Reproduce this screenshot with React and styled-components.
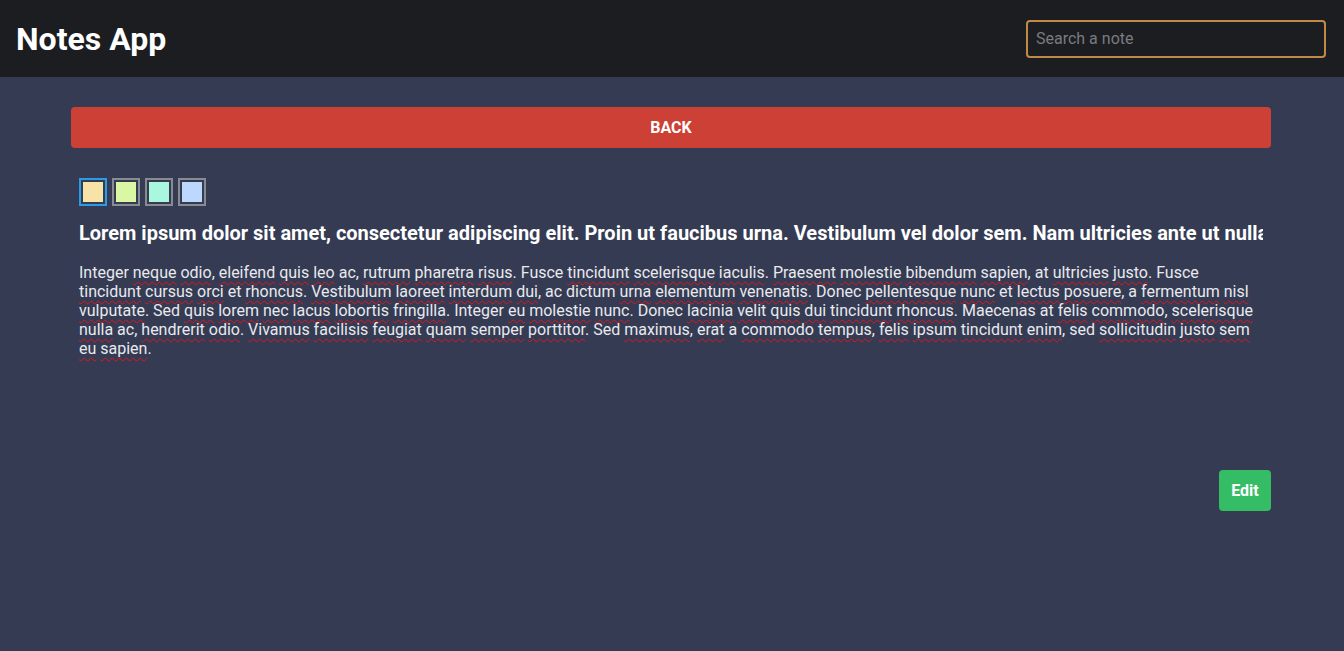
import React from "react";
import styled, { createGlobalStyle } from "styled-components";

const GlobalStyle = createGlobalStyle`
  body {
    margin: 0;
    background: #343b53;
    font-family: Roboto, "Liberation Sans", sans-serif;
  }
`;

const Header = styled.header`
  height: 77px;
  background: #1c1d21;
  display: flex;
  align-items: center;
  justify-content: space-between;
  padding: 0 18px 0 16px;
`;

const Brand = styled.h1`
  margin: 0;
  color: #fff;
  font-size: 32px;
  font-weight: 700;
`;

const Search = styled.input`
  width: 300px;
  height: 38px;
  box-sizing: border-box;
  background: #1c1d21;
  border: 2px solid #bf8a47;
  border-radius: 4px;
  padding: 0 8px;
  color: #eee;
  font-family: inherit;
  font-size: 16px;
  outline: none;
  &::placeholder {
    color: #7a7b7f;
  }
`;

const Main = styled.main`
  padding: 30px 73px 0 71px;
  display: flex;
  flex-direction: column;
`;

const BackButton = styled.button`
  height: 41px;
  border: none;
  border-radius: 4px;
  background: #cc4036;
  color: #fff;
  font-family: inherit;
  font-size: 16px;
  font-weight: 700;
  text-transform: uppercase;
`;

const Note = styled.section`
  padding: 30px 8px 0;
  display: flex;
  flex-direction: column;
`;

const Swatches = styled.div`
  display: flex;
  gap: 5px;
`;

const Swatch = styled.button`
  width: 28px;
  height: 28px;
  box-sizing: border-box;
  padding: 2px;
  border: 2px solid ${(p) => (p.$active ? "#2a9be6" : "#8a8b8f")};
  background: transparent;
  display: flex;
`;

const Fill = styled.span`
  flex: 1;
  background: ${(p) => p.$color};
`;

const Title = styled.h2`
  margin: 15px 0 0;
  color: #fff;
  font-size: 20px;
  font-weight: 700;
  white-space: nowrap;
  overflow: hidden;
`;

const Body = styled.p`
  margin: 18px 0 0;
  height: 187px;
  color: #e9e9ee;
  font-size: 16px;
  line-height: 19px;
`;

const Typo = styled.span`
  text-decoration: underline wavy #e0141e;
  text-decoration-thickness: 1px;
  text-underline-offset: 3px;
  text-decoration-skip-ink: none;
`;

const Actions = styled.div`
  display: flex;
  justify-content: flex-end;
  margin-right: -8px;
  margin-top: 20px;
`;

const EditButton = styled.button`
  width: 52px;
  height: 41px;
  border: none;
  border-radius: 4px;
  background: #35bd66;
  color: #fff;
  font-family: inherit;
  font-size: 16px;
  font-weight: 700;
`;

const colors = [
  { c: "#f7e2a7", active: true },
  { c: "#dcf7a4" },
  { c: "#a8f7de" },
  { c: "#bcd8ff" },
];

const text =
  "Integer neque odio, eleifend quis leo ac, rutrum pharetra risus. Fusce tincidunt scelerisque iaculis. Praesent molestie bibendum sapien, at ultricies justo. Fusce tincidunt cursus orci et rhoncus. Vestibulum laoreet interdum dui, ac dictum urna elementum venenatis. Donec pellentesque nunc et lectus posuere, a fermentum nisl vulputate. Sed quis lorem nec lacus lobortis fringilla. Integer eu molestie nunc. Donec lacinia velit quis dui tincidunt rhoncus. Maecenas at felis commodo, scelerisque nulla ac, hendrerit odio. Vivamus facilisis feugiat quam semper porttitor. Sed maximus, erat a commodo tempus, felis ipsum tincidunt enim, sed sollicitudin justo sem eu sapien.";

// words the spellchecker accepts
const known = new Set(["Integer", "ac", "Fusce", "at", "et", "a", "Sed", "sed", "dictum", "Donec", "Maecenas"]);

function renderText(t) {
  return t.split(" ").map((w, i) => {
    const m = w.match(/^([A-Za-z]+)(.*)$/);
    const sep = i > 0 ? " " : "";
    if (!m || known.has(m[1])) return sep + w;
    return (
      <React.Fragment key={i}>
        {sep}
        <Typo>{m[1]}</Typo>
        {m[2]}
      </React.Fragment>
    );
  });
}

export default function App() {
  return (
    <>
      <GlobalStyle />
      <Header>
        <Brand>Notes App</Brand>
        <Search placeholder="Search a note" />
      </Header>
      <Main>
        <BackButton>Back</BackButton>
        <Note>
          <Swatches>
            {colors.map((s) => (
              <Swatch key={s.c} $active={s.active}>
                <Fill $color={s.c} />
              </Swatch>
            ))}
          </Swatches>
          <Title>
            Lorem ipsum dolor sit amet, consectetur adipiscing elit. Proin ut faucibus urna. Vestibulum vel dolor sem. Nam ultricies ante ut nulla
          </Title>
          <Body>{renderText(text)}</Body>
          <Actions>
            <EditButton>Edit</EditButton>
          </Actions>
        </Note>
      </Main>
    </>
  );
}
